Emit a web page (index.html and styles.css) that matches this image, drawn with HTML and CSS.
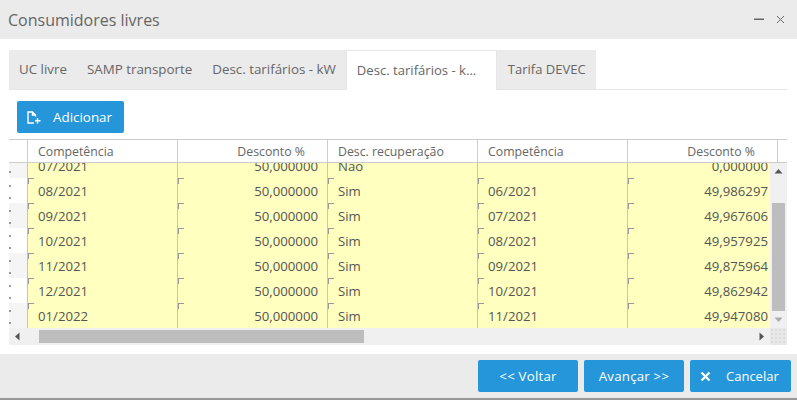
FILE: index.html
```html
<!DOCTYPE html>
<html lang="pt">
<head>
<meta charset="utf-8">
<title>Consumidores livres</title>
<link rel="stylesheet" href="styles.css">
</head>
<body>
<div class="dialog">
  <header class="titlebar">
    <span class="title">Consumidores livres</span>
    <span class="winctl">
      <svg width="10" height="9" viewBox="0 0 10 9"><rect x="0" y="3.500" width="10" height="1.500" fill="#666"/></svg>
      <svg width="9" height="9" viewBox="0 0 9 9"><path d="M1 1l7 7M8 1l-7 7" stroke="#666" fill="none"/></svg>
    </span>
  </header>
  <main class="content">
    <nav class="tabs">
      <span class="tab">UC livre</span>
      <span class="tab">SAMP transporte</span>
      <span class="tab">Desc. tarifários - kW</span>
      <span class="tab active">Desc. tarifários - k...</span>
      <span class="tab last">Tarifa DEVEC</span>
    </nav>
    <div class="toolbar">
      <button class="btn add">
        <svg width="14" height="13" viewBox="0 0 14 13"><path d="M8.500 5.500V4L5.500 1H1V12H7M5.500 1V4H8.500M10.500 7V12.500M8 9.750H13.500" stroke="#fff" stroke-width="1.400" fill="none"/></svg>
        Adicionar
      </button>
    </div>
    <div class="grid">
      <div class="ghead">
        <div class="corner"></div>
        <div class="hc">Competência</div>
        <div class="hc r">Desconto %</div>
        <div class="hc">Desc. recuperação</div>
        <div class="hc">Competência</div>
        <div class="hc r">Desconto %</div>
        <div class="hc tail"></div>
      </div>
      <div class="gbody">
        <div class="rows">
          <div class="row first"><div class="rh alt"><i></i></div><div class="c">07/2021</div><div class="c r">50,000000</div><div class="c">Não</div><div class="c"></div><div class="c r">0,000000</div></div>
          <div class="row"><div class="rh"><i></i><i></i></div><div class="c m">08/2021</div><div class="c r m">50,000000</div><div class="c m">Sim</div><div class="c m">06/2021</div><div class="c r m">49,986297</div></div>
          <div class="row"><div class="rh alt"><i></i><i></i></div><div class="c m">09/2021</div><div class="c r m">50,000000</div><div class="c m">Sim</div><div class="c m">07/2021</div><div class="c r m">49,967606</div></div>
          <div class="row"><div class="rh"><i></i><i></i></div><div class="c m">10/2021</div><div class="c r m">50,000000</div><div class="c m">Sim</div><div class="c m">08/2021</div><div class="c r m">49,957925</div></div>
          <div class="row"><div class="rh alt"><i></i><i></i></div><div class="c m">11/2021</div><div class="c r m">50,000000</div><div class="c m">Sim</div><div class="c m">09/2021</div><div class="c r m">49,875964</div></div>
          <div class="row"><div class="rh"><i></i><i></i></div><div class="c m">12/2021</div><div class="c r m">50,000000</div><div class="c m">Sim</div><div class="c m">10/2021</div><div class="c r m">49,862942</div></div>
          <div class="row"><div class="rh alt"><i></i><i></i></div><div class="c m">01/2022</div><div class="c r m">50,000000</div><div class="c m">Sim</div><div class="c m">11/2021</div><div class="c r m">49,947080</div></div>
        </div>
        <div class="vbar">
          <svg width="17" height="17" viewBox="0 0 17 17"><path d="M4.500 10.500l4-4.500 4 4.500z" fill="#555"/></svg>
          <div class="vtrack"><div class="vthumb"></div></div>
          <svg width="17" height="17" viewBox="0 0 17 17"><path d="M4.500 6.500l4 4.500 4-4.500z" fill="#aaa"/></svg>
        </div>
      </div>
      <div class="hbar">
        <svg width="17" height="17" viewBox="0 0 17 17"><path d="M10.500 4.500l-4.500 4 4.500 4z" fill="#555"/></svg>
        <div class="htrack"><div class="hthumb"></div></div>
        <svg width="17" height="17" viewBox="0 0 17 17"><path d="M6.500 4.500l4.500 4-4.500 4z" fill="#555"/></svg>
        <div class="hcorner"></div>
      </div>
    </div>
  </main>
  <footer class="footer">
    <button class="btn foot wide">&lt;&lt; Voltar</button>
    <button class="btn foot wide">Avançar &gt;&gt;</button>
    <button class="btn foot cancel">
      <svg width="11" height="11" viewBox="0 0 11 11"><path d="M1.500 1.500l8 8M9.500 1.500l-8 8" stroke="#fff" stroke-width="2.200" fill="none"/></svg>
      Cancelar
    </button>
  </footer>
</div>
</body>
</html>
```
FILE: styles.css
```css
* { box-sizing: border-box; }
html, body { margin: 0; padding: 0; background: #fff; }
body { width: 797px; height: 400px; overflow: hidden; font-family: "Open Sans", sans-serif; color: #666; }
.dialog { display: flex; flex-direction: column; height: 400px; }
.titlebar { height: 39px; background: #ebebeb; display: flex; align-items: center; justify-content: space-between; padding: 0 12px 0 8px; flex: none; }
.title { font-size: 16px; color: #666; }
.winctl { display: flex; gap: 12px; align-items: center; }
.winctl svg { display: block; }
.content { flex: none; height: 315px; padding: 11px 10px 0 9px; }
.tabs { display: flex; height: 40px; border-bottom: 1px solid #e6e6e6; }
.tab { background: #ebebeb; padding: 0 10px; line-height: 39px; font-size: 13.350px; color: #666; height: 39px; white-space: nowrap; }
.tab.active { background: #fff; border: 1px solid #e6e6e6; border-bottom: 0; height: 40px; width: 151px; line-height: 38px; font-size: 13.100px; padding: 0 10px; }
.tab.last { font-size: 13px; width: 99px; padding: 0 0 0 11px; }
.toolbar { padding: 11px 8px 6px; height: 49px; }
.btn { background: #2596d9; color: #fff; border: 0; border-radius: 2px; font-family: "Open Sans", sans-serif; font-size: 13px; height: 32px; display: inline-flex; align-items: center; justify-content: center; padding: 0; }
.add { width: 107px; gap: 12px; justify-content: flex-start; padding-left: 10px; font-size: 13.400px; }
.grid { width: 778px; border-top: 1px solid #ccc; }
.ghead { display: flex; height: 23px; border-bottom: 1px solid #ccc; }
.corner { width: 19px; border-right: 1px solid #ccc; flex: none; }
.hc { width: 150px; flex: none; border-right: 1px solid #ccc; padding: 0 10px; line-height: 23px; font-size: 12.300px; color: #666; white-space: nowrap; }
.hc.r { text-align: right; padding-right: 22px; }
.hc.tail { flex: 1; width: auto; border: 0; }
.gbody { height: 165px; display: flex; overflow: hidden; }
.rows { width: 761px; overflow: hidden; }
.row { display: flex; height: 25px; width: 800px; }
.row.first { height: 15px; }
.rh { width: 18px; flex: none; display: flex; flex-direction: column; gap: 10px; padding-top: 7px; }
.row.first .rh { padding-top: 8px; }
.rh.alt { background: #f5f5f5; }
.rh i { width: 2px; height: 2px; background: #999; display: block; }
.c { width: 150px; flex: none; background: #ffffbf; border-left: 1px solid #c8c8a8; padding: 0 9px 0 10px; color: #555; font-size: 13.200px; line-height: 26px; }
.row.first .c { height: 15px; line-height: 6px; overflow: hidden; }
.c.r { text-align: right; }
.c.m { position: relative; }
.c.m::before { content: ""; position: absolute; left: 0; top: 0; width: 5px; height: 5px; border-left: 1px solid #999; border-top: 1px solid #999; }
.vbar { width: 17px; background: #f0f0f0; display: flex; flex-direction: column; flex: none; }
.vbar svg, .hbar svg { display: block; flex: none; }
.vtrack { flex: 1; padding-top: 23px; }
.vthumb { height: 108px; margin: 0 2px; background: #bdbdbd; }
.hbar { height: 17px; background: #f0f0f0; display: flex; }
.htrack { width: 727px; padding: 2px 0; }
.hthumb { margin-left: 13px; width: 325px; height: 13px; background: #bdbdbd; }
.hcorner { width: 17px; background-color: #e8e8e8; background-image: radial-gradient(#dcdcdc 1px, transparent 1px); background-size: 4px 4px; }
.footer { flex: 1; background: #ebebeb; border-bottom: 2px solid #999; display: flex; justify-content: flex-end; gap: 6px; padding: 6px 6px 0 0; }
.foot { width: 100px; }
.wide { letter-spacing: 0.200px; font-size: 13.300px; }
.cancel { width: 101px; gap: 15px; justify-content: flex-start; padding-left: 10px; }
```
